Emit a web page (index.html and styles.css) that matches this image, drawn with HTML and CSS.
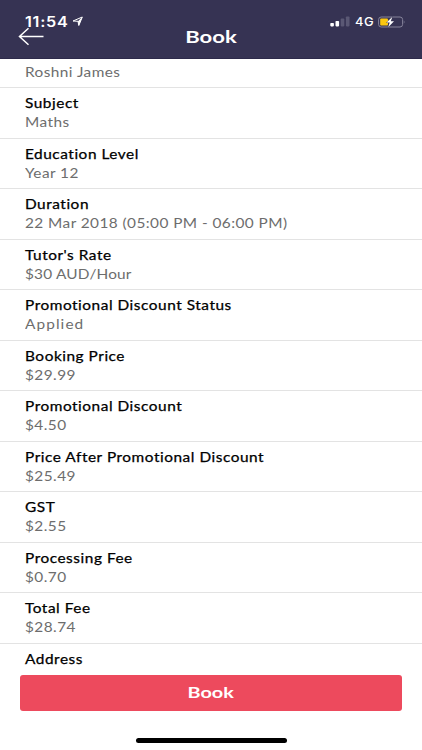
FILE: index.html
```
<!DOCTYPE html>
<html lang="en">
<head>
  <meta charset="UTF-8" />
  <meta name="viewport" content="width=device-width, initial-scale=1.0"/>
  <title>Book</title>
  <link rel="stylesheet" href="styles.css">
</head>
<body>
  <header class="header">
    <div class="status-bar">
      <span class="time">11:54</span>
      <svg class="location" width="12" height="11" viewBox="0 0 12 11"><path d="M1 5 L10.3 1 L6.8 9.5 L6 5.3 Z" fill="none" stroke="#fff" stroke-width="1" stroke-linejoin="round"/><path d="M6 5.3 L10.3 1 L6.8 9.5 Z" fill="#fff"/></svg>
      <svg class="signal" width="20" height="11" viewBox="0 0 20 11">
        <rect x="0.3" y="7" width="3.6" height="3.4" rx="0.8" fill="#fff"/>
        <rect x="5.5" y="5" width="3.6" height="5.4" rx="0.8" fill="#fff"/>
        <rect x="10.7" y="2.6" width="3.6" height="7.8" rx="0.8" fill="#5a5874"/>
        <rect x="15.9" y="0.4" width="3.6" height="10" rx="0.8" fill="#5a5874"/>
      </svg>
      <span class="network">4G</span>
      <svg class="battery" width="28" height="12" viewBox="0 0 28 12">
        <rect x="0.6" y="1" width="24" height="10" rx="2.6" fill="none" stroke="#85839a"/>
        <path d="M25.8 4.2 Q27.4 6 25.8 7.8 Z" fill="#85839a"/>
        <rect x="2.2" y="2.4" width="7.8" height="7.2" rx="1" fill="#fbc80f"/>
        <path d="M14.4 0.8 L8.6 6.5 H11.7 L10.2 11.2 L16 5.3 H12.8 Z" fill="#fff" stroke="#363353" stroke-width="0.7" paint-order="stroke"/>
      </svg>
    </div>
    <svg class="back" width="27" height="19" viewBox="0 0 27 19"><path d="M10.5 1.3 L1.5 9.5 L10.5 17.7 M1.5 9.5 H25.5" fill="none" stroke="#fff" stroke-width="1.5"/></svg>
    <h1>Book</h1>
  </header>

  <main class="details">
    <div class="row first"><p>Roshni James</p></div>
    <div class="row"><h2>Subject</h2><p>Maths</p></div>
    <div class="row"><h2>Education Level</h2><p>Year 12</p></div>
    <div class="row"><h2>Duration</h2><p>22 Mar 2018 (05:00 PM - 06:00 PM)</p></div>
    <div class="row"><h2>Tutor's Rate</h2><p class="rate">$30 AUD/Hour</p></div>
    <div class="row"><h2>Promotional Discount Status</h2><p class="status">Applied</p></div>
    <div class="row"><h2>Booking Price</h2><p>$29.99</p></div>
    <div class="row"><h2>Promotional Discount</h2><p>$4.50</p></div>
    <div class="row"><h2>Price After Promotional Discount</h2><p>$25.49</p></div>
    <div class="row"><h2>GST</h2><p>$2.55</p></div>
    <div class="row"><h2>Processing Fee</h2><p>$0.70</p></div>
    <div class="row"><h2>Total Fee</h2><p>$28.74</p></div>
    <div class="row last"><h2>Address</h2></div>
  </main>

  <footer class="footer">
    <button class="btn"><span>Book</span></button>
    <div class="home-bar"></div>
  </footer>
</body>
</html>
```

FILE: styles.css
```
* {
  box-sizing: border-box;
}

body {
  margin: 0;
  height: 750px;
  display: flex;
  flex-direction: column;
  overflow: hidden;
  background-color: #fff;
  font-family: Lato, sans-serif;
}

h1, h2, p {
  margin: 0;
}

.header {
  position: relative;
  flex: none;
  height: 59px;
  background-color: #363353;
  border-bottom: 1px solid #2d2a4a;
  color: #fff;
}

.status-bar {
  display: flex;
  align-items: center;
  height: 43px;
  padding: 0 16px 0 25px;
  font-family: Inter, sans-serif;
}

.time {
  width: 43px;
  font-size: 14px;
  font-weight: 600;
  letter-spacing: 0.6px;
  transform: scaleX(1.16);
  transform-origin: left;
}

.location {
  margin-left: 4px;
}

.signal {
  margin-left: auto;
}

.network {
  width: 18px;
  margin: 0 5px;
  font-size: 11.5px;
  font-weight: 500;
  letter-spacing: 0.4px;
  transform: scaleX(1.12);
  transform-origin: left;
}

.back {
  position: absolute;
  left: 18px;
  top: 27px;
}

.header h1 {
  position: absolute;
  left: 161px;
  width: 100px;
  top: 26px;
  font-size: 17.5px;
  line-height: 22px;
  font-weight: 700;
  text-align: center;
  transform: scaleX(1.26);
}

.details {
  flex: none;
  height: 616px;
  overflow: hidden;
}

.row {
  height: 50.5px;
  padding: 6px 25px 0;
  border-bottom: 1px solid #e3e3e3;
}

.row.first {
  height: 29px;
  padding-top: 4px;
}

.row.last {
  border-bottom: none;
}

.row h2,
.row p {
  width: max-content;
  font-size: 13.5px;
  line-height: 19px;
  font-weight: 400;
  white-space: nowrap;
  transform: scaleX(1.14);
  transform-origin: left;
}

.row h2 {
  color: #000;
  letter-spacing: 0.47px;
  -webkit-text-stroke: 0.25px #000;
}

.row p {
  color: #6d6d6d;
  letter-spacing: 0.38px;
}

.row .rate {
  letter-spacing: 0.15px;
}

.row .status {
  letter-spacing: 0.95px;
}

.footer {
  display: flex;
  flex-direction: column;
  align-items: center;
}

.btn {
  width: 382px;
  height: 36px;
  padding: 0 0 4px;
  border: none;
  border-radius: 3px;
  background-color: #ed4a5d;
  color: #fff;
  font-family: Lato, sans-serif;
  font-size: 16px;
  font-weight: 700;
}

.btn span {
  display: inline-block;
  transform: scaleX(1.24);
}

.home-bar {
  width: 151px;
  height: 5px;
  margin-top: 27px;
  border-radius: 3px;
  background-color: #000;
}
```
